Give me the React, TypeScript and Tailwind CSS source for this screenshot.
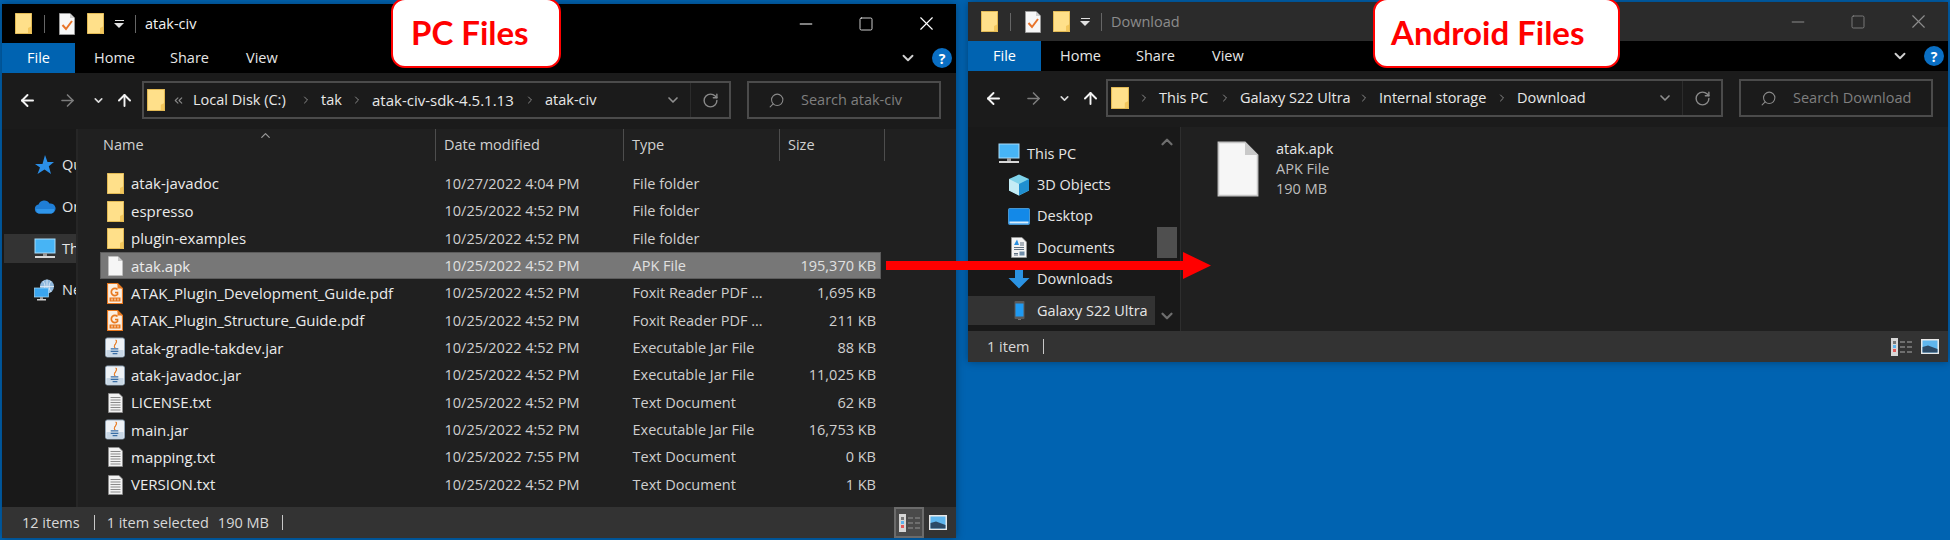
import { ArrowLeft, ArrowRight, ArrowUp, ChevronDown, ChevronRight, ChevronUp, ChevronsLeft, Minus, RotateCw, Search, Square, X } from 'lucide-react';
import type { ReactNode } from 'react';

function FolderIcon({ className = 'w-[17px] h-[21px] shrink-0' }: { className?: string }) {
  return (
    <svg viewBox="0 0 17 21" className={className}>
      <rect x="0" y="0" width="17" height="21" rx="1" fill="#ffe08a" />
      <path d="M13 21 V15 L17 13 V21 Z" fill="#f3c75d" />
      <rect x="0.5" y="0.5" width="16" height="20" rx="1" fill="none" stroke="#e2b953" strokeWidth="1" />
    </svg>
  );
}

function TaskDocIcon() {
  return (
    <svg viewBox="0 0 16 22" className="w-[16px] h-[22px]">
      <path d="M0.5 0.5 H11 L15.5 5 V21.5 H0.5 Z" fill="#f7f7f7" stroke="#9a9a9a" />
      <path d="M11 0.5 V5 H15.5" fill="#cfcfcf" />
      <path d="M3.5 12 L7 16 L13 8" fill="none" stroke="#e8742a" strokeWidth="2" />
    </svg>
  );
}

function BlankDocIcon({ className = 'w-[15px] h-[20px]' }: { className?: string }) {
  return (
    <svg viewBox="0 0 15 20" className={className}>
      <path d="M0.5 0.5 H10 L14.5 5 V19.5 H0.5 Z" fill="#f6f6f6" stroke="#c4c4c4" strokeWidth="0.6" />
      <path d="M10 0.5 L14.5 5 H10 Z" fill="#c9c9c9" />
    </svg>
  );
}

function TextDocIcon() {
  return (
    <svg viewBox="0 0 15 20" className="w-[15px] h-[20px]">
      <path d="M0.5 0.5 H11 L14.5 4 V19.5 H0.5 Z" fill="#f2f2f2" stroke="#8d8d8d" strokeWidth="0.8" />
      {[4, 6.5, 9, 11.5, 14, 16.5].map(y => (
        <rect key={y} x="2.5" y={y} width="10" height="1" fill="#8a8a8a" />
      ))}
    </svg>
  );
}

function PdfIcon() {
  return (
    <svg viewBox="0 0 16 21" className="w-[16px] h-[21px]">
      <path d="M0.5 0.5 H10.5 L15.5 5.5 V20.5 H0.5 Z" fill="#fbeee0" stroke="#e8791f" strokeWidth="1.2" />
      <path d="M10.5 0 L16 5.5 H10.5 Z" fill="#e8791f" />
      <path d="M10.5 6.5 A3.6 3.6 0 1 0 10.5 11.5 V9.5 H8" fill="none" stroke="#e8791f" strokeWidth="1.7" />
      <rect x="2.5" y="14.5" width="11" height="4" fill="#e8791f" />
      <rect x="4.5" y="15.5" width="1" height="2" fill="#fbeee0" />
      <rect x="7.5" y="15.5" width="1" height="2" fill="#fbeee0" />
      <rect x="10.5" y="15.5" width="1" height="2" fill="#fbeee0" />
    </svg>
  );
}

function JarIcon() {
  return (
    <svg viewBox="0 0 21 21" className="w-[21px] h-[21px]">
      <rect x="0.5" y="0.5" width="20" height="20" rx="2" fill="#eef2f6" stroke="#8fa3b5" />
      <rect x="1.5" y="13" width="18" height="7" rx="1" fill="#c9d8e6" />
      <path d="M11.5 2.5 C14 5.5 8 7 10.5 11 C8 8.5 13.5 6.5 11.5 2.5 Z" fill="#e8791f" stroke="#e8791f" strokeWidth="1" />
      <path d="M6 12 H14 M6 14.5 H14 M8 17 H13" stroke="#3a6ea5" strokeWidth="1.2" />
    </svg>
  );
}

function MonitorIcon() {
  return (
    <svg viewBox="0 0 22 21" className="w-[22px] h-[21px] shrink-0">
      <rect x="1" y="1" width="20" height="14" fill="#47b4f5" stroke="#a8dcfa" strokeWidth="1" />
      <rect x="9" y="15" width="4" height="3" fill="#9a9a9a" />
      <rect x="1" y="18" width="20" height="2" fill="#d8d8d8" />
    </svg>
  );
}

function CloudIcon() {
  return (
    <svg viewBox="0 0 22 15" className="w-[22px] h-[15px] shrink-0">
      <path d="M5 14.5 A4.5 4.5 0 0 1 4.5 5.6 A6 6 0 0 1 15.5 4.6 A5 5 0 0 1 17.5 14.5 Z" fill="#1f7ed6" />
      <path d="M2 10 H20 V12 Q19 14.5 17 14.5 H5 Q2.5 14.5 2 10 Z" fill="#2f95ea" />
    </svg>
  );
}

function NetworkIcon() {
  return (
    <svg viewBox="0 0 22 22" className="w-[22px] h-[22px] shrink-0">
      <circle cx="13" cy="7.5" r="7" fill="#8fb8dc" />
      <path d="M13 0.5 V14.5 M6 7.5 H20 M9 2 Q13 7 9 13 M17 2 Q13 7 17 13" stroke="#e4eef7" strokeWidth="0.8" fill="none" />
      <rect x="0.5" y="9" width="14" height="9" fill="#3aa5ef" stroke="#a8dcfa" strokeWidth="0.7" />
      <rect x="6" y="18" width="3" height="2" fill="#9a9a9a" />
      <rect x="3" y="20" width="9" height="1.5" fill="#d0d0d0" />
    </svg>
  );
}

function CubeIcon() {
  return (
    <svg viewBox="0 0 22 22" className="w-[22px] h-[22px]">
      <path d="M11 0.5 L21 5 V16.5 L11 21.5 L1 16.5 V5 Z" fill="#7fd3ea" />
      <path d="M1 5 L11 10 V21.5 L1 16.5 Z" fill="#c4ecf5" />
      <path d="M21 5 L11 10 V21.5 L21 16.5 Z" fill="#1f8fd0" />
    </svg>
  );
}

function DesktopIcon() {
  return (
    <svg viewBox="0 0 22 17" className="w-[22px] h-[17px]">
      <rect x="0.5" y="0.5" width="21" height="16" rx="1" fill="#1389e8" stroke="#5fb4f2" strokeWidth="0.7" />
      <rect x="1.5" y="13.5" width="19" height="2" fill="#d9eefc" />
    </svg>
  );
}

function DocumentsIcon() {
  return (
    <svg viewBox="0 0 16 21" className="w-[16px] h-[21px]">
      <path d="M0.5 0.5 H11 L15.5 5 V20.5 H0.5 Z" fill="#f4f4f4" stroke="#9a9a9a" strokeWidth="0.7" />
      <path d="M6 2.5 L3 8 H8 Z" fill="#2b8fe0" />
      <path d="M9 6 H13 M9 8 H13 M3 10.5 H13 M3 12.5 H13 M3 16.5 H7 M3 18 H7" stroke="#5f6f80" strokeWidth="1" />
      <rect x="8.5" y="14.5" width="5" height="4" fill="#6d8ba8" />
    </svg>
  );
}

function DownloadsIcon() {
  return (
    <svg viewBox="0 0 22 20" className="w-[22px] h-[20px]">
      <path d="M7 0 H15 V9 H21.5 L11 19.5 L0.5 9 H7 Z" fill="#2b93e3" />
    </svg>
  );
}

function PhoneIcon() {
  return (
    <svg viewBox="0 0 11 19" className="w-[11px] h-[19px]">
      <rect x="0.5" y="0" width="10" height="18" rx="1" fill="#5a5a5a" />
      <rect x="1.5" y="2.5" width="8" height="13" fill="#1f9af2" />
      <rect x="4" y="18" width="3" height="1" fill="#777" />
    </svg>
  );
}

function ViewIcons({ boxed }: { boxed: boolean }) {
  return (
    <div className="flex items-center h-full gap-[5px] pr-[9px]">
      <div className={`flex items-center justify-center gap-[2px] w-[30px] h-full ${boxed ? 'border-2 border-[#6b6b6b] bg-[#4a4a4a]' : ''}`}>
        <div className="flex flex-col items-center justify-center gap-[1px] w-[7px] h-[18px] bg-[#d6d6d6]">
          <div className="w-[3px] h-[3px] bg-[#777]" />
          <div className="w-[3px] h-[3px] bg-[#5eb4ee]" />
          <div className="w-[3px] h-[3px] bg-[#e05a5a]" />
        </div>
        <div className="grid grid-cols-2 gap-x-[2px] gap-y-[3px]">
          {[0, 1, 2, 3, 4, 5].map(i => (
            <div key={i} className="w-[5px] h-[2px] bg-[#6e6e6e]" />
          ))}
        </div>
      </div>
      <svg viewBox="0 0 18 15" className="w-[18px] h-[15px]">
        <rect x="0" y="0" width="18" height="15" fill="#e8e8e8" />
        <rect x="1.5" y="1.5" width="15" height="12" fill="#5fb6ee" />
        <path d="M1.5 8 L7 6.5 L16.5 10 V13.5 H1.5 Z" fill="#2d4a66" />
      </svg>
    </div>
  );
}

function TitleBar({ title, active }: { title: string; active: boolean }) {
  const fg = active ? 'text-[#f2f2f2]' : 'text-[#8c8c8c]';
  return (
    <div className={`flex items-center h-[39px] shrink-0 pl-[13px] ${active ? 'bg-black' : 'bg-[#2b2b2b]'}`}>
      <FolderIcon />
      <div className="ml-[12px] w-[1px] h-[18px] bg-[#666]" />
      <div className="ml-[14px]"><TaskDocIcon /></div>
      <div className="ml-[12px]"><FolderIcon /></div>
      <div className="ml-[8px] w-[14px] flex flex-col items-center gap-[2px]">
        <div className="w-[9px] h-[1px] bg-[#e0e0e0]" />
        <div className="w-0 h-0 border-x-[5px] border-x-transparent border-t-[5px] border-t-[#e0e0e0]" />
      </div>
      <div className="ml-[9px] w-[1px] h-[18px] bg-[#666]" />
      <span className={`ml-[9px] ${fg}`}>{title}</span>
      <div className={`ml-auto flex items-center ${active ? 'text-white' : 'text-[#8c8c8c]'}`}>
        <div className="w-[60px] flex justify-center"><Minus size={20} strokeWidth={1.2} /></div>
        <div className="w-[60px] flex justify-center"><Square size={16} strokeWidth={1.2} /></div>
        <div className="w-[60px] flex justify-center"><X size={23} strokeWidth={1.2} /></div>
      </div>
    </div>
  );
}

function RibbonTabs() {
  return (
    <div className="flex items-center h-[30px] shrink-0 bg-black text-[#e6e6e6]">
      <div className="w-[73px] h-full flex items-center justify-center bg-[#0063b1] text-white">File</div>
      <span className="ml-[19px] w-[76px]">Home</span>
      <span className="w-[76px]">Share</span>
      <span>View</span>
      <ChevronDown size={18} strokeWidth={2.5} className="ml-auto text-[#d0d0d0]" />
      <div className="ml-[15px] mr-[4px] w-[20px] h-[20px] rounded-full bg-[#0a6fc4] flex items-center justify-center text-white text-[14px] font-bold">?</div>
    </div>
  );
}

function Crumbs({ items }: { items: { label: string; width: string }[] }) {
  return (
    <>
      {items.map((c, i) => (
        <div key={c.label} className="flex items-center">
          <span className={`${c.width} whitespace-nowrap text-[#e8e8e8]`}>{c.label}</span>
          {i < items.length - 1 && (
            <div className="w-[19px]"><ChevronRight size={12} strokeWidth={2} className="-ml-[2px] text-[#8a8a8a]" /></div>
          )}
        </div>
      ))}
    </>
  );
}

function NavRow({ lead, address, search, navWidth }: { lead: ReactNode; address: ReactNode; search: string; navWidth: string }) {
  return (
    <div className="flex items-start h-[56px] shrink-0 pt-[8px] pr-[15px] gap-[16px] bg-[#1b1b1b]">
      <div className={`${navWidth} -mr-[16px] shrink-0 h-[38px] flex items-center pl-[16px] text-[#f4f4f4]`}>
        <ArrowLeft size={19} strokeWidth={2.4} />
        <ArrowRight size={19} strokeWidth={2} className="ml-[21px] text-[#7d7d7d]" />
        <ChevronDown size={13} strokeWidth={3} className="ml-[15px] text-[#d8d8d8]" />
        <ArrowUp size={19} strokeWidth={2.4} className="ml-[10px]" />
      </div>
      <div className="flex-1 h-[38px] flex items-center border-2 border-[#4b4b4b] pl-[3px]">
        <FolderIcon className="w-[18px] h-[24px] shrink-0" />
        {lead}
        {address}
        <div className="ml-auto flex items-center h-full">
          <ChevronDown size={16} strokeWidth={2.5} className="text-[#8f8f8f]" />
          <div className="ml-[9px] w-[1px] h-full bg-[#2c2c2c]" />
          <div className="w-[38px] flex justify-center"><RotateCw size={17} strokeWidth={2} className="text-[#8a8a8a]" /></div>
        </div>
      </div>
      <div className="w-[194px] h-[38px] flex items-center border-2 border-[#4b4b4b] pl-[19px] text-[#7f7f7f]">
        <Search size={17} strokeWidth={1.5} className="-scale-x-100 text-[#8a8a8a]" />
        <span className="ml-[16px] whitespace-nowrap">{search}</span>
      </div>
    </div>
  );
}

function PaneItem({ icon, label, selected }: { icon: ReactNode; label: string; selected?: boolean }) {
  return (
    <div className={`flex items-center h-[29px] pl-[30px] whitespace-nowrap text-[#e6e6e6] ${selected ? 'bg-[#333]' : ''}`}>
      <div className="w-[22px] shrink-0 flex justify-center">{icon}</div>
      <span className="ml-[7px]">{label}</span>
    </div>
  );
}

const files = [
  { name: 'atak-javadoc', date: '10/27/2022 4:04 PM', type: 'File folder', size: '', icon: <FolderIcon /> },
  { name: 'espresso', date: '10/25/2022 4:52 PM', type: 'File folder', size: '', icon: <FolderIcon /> },
  { name: 'plugin-examples', date: '10/25/2022 4:52 PM', type: 'File folder', size: '', icon: <FolderIcon /> },
  { name: 'atak.apk', date: '10/25/2022 4:52 PM', type: 'APK File', size: '195,370 KB', icon: <BlankDocIcon />, selected: true },
  { name: 'ATAK_Plugin_Development_Guide.pdf', date: '10/25/2022 4:52 PM', type: 'Foxit Reader PDF ...', size: '1,695 KB', icon: <PdfIcon /> },
  { name: 'ATAK_Plugin_Structure_Guide.pdf', date: '10/25/2022 4:52 PM', type: 'Foxit Reader PDF ...', size: '211 KB', icon: <PdfIcon /> },
  { name: 'atak-gradle-takdev.jar', date: '10/25/2022 4:52 PM', type: 'Executable Jar File', size: '88 KB', icon: <JarIcon /> },
  { name: 'atak-javadoc.jar', date: '10/25/2022 4:52 PM', type: 'Executable Jar File', size: '11,025 KB', icon: <JarIcon /> },
  { name: 'LICENSE.txt', date: '10/25/2022 4:52 PM', type: 'Text Document', size: '62 KB', icon: <TextDocIcon /> },
  { name: 'main.jar', date: '10/25/2022 4:52 PM', type: 'Executable Jar File', size: '16,753 KB', icon: <JarIcon /> },
  { name: 'mapping.txt', date: '10/25/2022 7:55 PM', type: 'Text Document', size: '0 KB', icon: <TextDocIcon /> },
  { name: 'VERSION.txt', date: '10/25/2022 4:52 PM', type: 'Text Document', size: '1 KB', icon: <TextDocIcon /> },
];

function PcWindow() {
  return (
    <div className="w-[954px] h-[534px] mt-[4px] shrink-0 flex flex-col shadow-[0_0_8px_rgba(0,0,0,0.35)]">
      <TitleBar title="atak-civ" active />
      <RibbonTabs />
      <NavRow
        navWidth="w-[140px]"
        lead={<ChevronsLeft size={13} strokeWidth={2} className="ml-[7px] text-[#8a8a8a]" />}
        address={
          <div className="ml-[8px] flex">
            <Crumbs items={[
              { label: 'Local Disk (C:)', width: 'w-[109px]' },
              { label: 'tak', width: 'w-[32px]' },
              { label: 'atak-civ-sdk-4.5.1.13', width: 'w-[154px] text-[15px]' },
              { label: 'atak-civ', width: 'w-[60px]' },
            ]} />
          </div>
        }
        search="Search atak-civ"
      />
      <div className="flex-1 flex min-h-0">
        <div className="w-[74px] shrink-0 overflow-hidden bg-[#191919] pt-[22px] flex flex-col">
          <div className="flex items-center h-[28px] pl-[32px] whitespace-nowrap text-[#e6e6e6]">
            <svg viewBox="0 0 20 20" className="w-[20px] h-[20px] shrink-0"><path d="M11 0 L13.5 7 H20 L14.8 11.2 L17 19 L10.5 14.5 L3.5 19 L6 12.5 L1 9 H8.5 Z" fill="#2b8fe8" /></svg>
            <span className="ml-[8px]">Quick access</span>
          </div>
          <div className="flex items-center h-[28px] mt-[13.5px] pl-[32px] whitespace-nowrap text-[#e6e6e6]">
            <CloudIcon />
            <span className="ml-[6px]">OneDrive</span>
          </div>
          <div className="flex items-center h-[29px] mt-[13.5px] ml-[2px] pl-[30px] whitespace-nowrap text-[#e6e6e6] bg-[#333]">
            <MonitorIcon />
            <span className="ml-[6px]">This PC</span>
          </div>
          <div className="flex items-center h-[28px] mt-[13px] pl-[32px] whitespace-nowrap text-[#e6e6e6]">
            <NetworkIcon />
            <span className="ml-[6px]">Network</span>
          </div>
        </div>
        <div className="w-[2px] bg-[#262626]" />
        <div className="flex-1 bg-[#202020] min-w-0 relative">
          <ChevronUp size={15} strokeWidth={2} className="absolute left-[180px] -top-[1px] text-[#9a9a9a]" />
          <div className="flex h-[41px] text-[#d0d0d0]">
            <div className="w-[358px] h-[32px] pl-[25px] pt-[5px] border-r border-[#4d4d4d]">Name</div>
            <div className="w-[188px] h-[32px] pl-[8px] pt-[5px] border-r border-[#4d4d4d]">Date modified</div>
            <div className="w-[156px] h-[32px] pl-[8px] pt-[5px] border-r border-[#4d4d4d]">Type</div>
            <div className="w-[105px] h-[32px] pl-[8px] pt-[5px] border-r border-[#4d4d4d]">Size</div>
          </div>
          <div className="ml-[22px] w-[781px]">
            {files.map(f => (
              <div key={f.name} className={`flex items-center h-[27.36px] pl-[5px] pr-[5px] whitespace-nowrap ${f.selected ? 'bg-[#777] outline outline-1 -outline-offset-1 outline-[#5c5c5c] text-[#e0e0e0]' : 'text-[#cfcfcf]'}`}>
                <div className="w-[20px] mr-[6px] flex justify-center">{f.icon}</div>
                <span className="w-[313.5px] text-[15px] text-[#ebebeb]">{f.name}</span>
                <span className="w-[188px]">{f.date}</span>
                <span className="flex-1">{f.type}</span>
                <span className="text-right">{f.size}</span>
              </div>
            ))}
          </div>
        </div>
      </div>
      <div className="flex items-center h-[31px] shrink-0 bg-[#333] text-[#d8d8d8] pl-[20px]">
        <span>12 items</span>
        <div className="ml-[14px] w-[1px] h-[15px] bg-[#c8c8c8]" />
        <span className="ml-[12px]">1 item selected</span>
        <span className="ml-[9px]">190 MB</span>
        <div className="ml-[13px] w-[1px] h-[15px] bg-[#c8c8c8]" />
        <div className="ml-auto h-full"><ViewIcons boxed /></div>
      </div>
    </div>
  );
}

function AndroidWindow() {
  return (
    <div className="w-[980px] h-[360px] mt-[2px] ml-[12px] shrink-0 flex flex-col shadow-[0_0_8px_rgba(0,0,0,0.35)]">
      <TitleBar title="Download" active={false} />
      <RibbonTabs />
      <NavRow
        navWidth="w-[138px]"
        lead={<div className="ml-[9px] w-[21px]"><ChevronRight size={12} strokeWidth={2} className="text-[#8a8a8a]" /></div>}
        address={
          <div className="flex">
            <Crumbs items={[
              { label: 'This PC', width: 'w-[62px]' },
              { label: 'Galaxy S22 Ultra', width: 'w-[120px]' },
              { label: 'Internal storage', width: 'w-[119px]' },
              { label: 'Download', width: 'w-[70px]' },
            ]} />
          </div>
        }
        search="Search Download"
      />
      <div className="flex-1 flex min-h-0">
        <div className="w-[212px] shrink-0 flex bg-[#191919]">
          <div className="w-[187px] shrink-0 pt-[12px] flex flex-col gap-[2.4px] overflow-hidden">
            <PaneItem icon={<MonitorIcon />} label="This PC" />
            <div className="pl-[10px] flex flex-col gap-[2.4px]">
              <PaneItem icon={<CubeIcon />} label="3D Objects" />
              <PaneItem icon={<DesktopIcon />} label="Desktop" />
              <PaneItem icon={<DocumentsIcon />} label="Documents" />
              <PaneItem icon={<DownloadsIcon />} label="Downloads" />
            </div>
            <div className="bg-[#333] pl-[10px]">
              <PaneItem icon={<PhoneIcon />} label="Galaxy S22 Ultra" selected />
            </div>
          </div>
          <div className="flex-1 flex flex-col items-center py-[6px] pl-[2px] pr-[3px] text-[#6e6e6e]">
            <ChevronUp size={18} strokeWidth={3} />
            <div className="mt-[76px] w-[20px] h-[31px] bg-[#4f4f4f]" />
            <ChevronDown size={18} strokeWidth={3} className="mt-auto" />
          </div>
        </div>
        <div className="w-[1px] bg-[#2e2e2e]" />
        <div className="flex-1 bg-[#202020] flex items-start pl-[36px] pt-[14px]">
          <BlankDocIcon className="w-[42px] h-[56px]" />
          <div className="ml-[17px] -mt-[2px] flex flex-col leading-[20px] text-[#bdbdbd]">
            <span className="text-[#e6e6e6]">atak.apk</span>
            <span>APK File</span>
            <span>190 MB</span>
          </div>
        </div>
      </div>
      <div className="flex items-center h-[31px] shrink-0 bg-[#333] text-[#d8d8d8] pl-[19px]">
        <span>1 item</span>
        <div className="ml-[14px] w-[1px] h-[15px] bg-[#c8c8c8]" />
        <div className="ml-auto h-full"><ViewIcons boxed={false} /></div>
      </div>
    </div>
  );
}

export default function App() {
  return (
    <div className="relative w-[1950px] h-[540px] overflow-hidden bg-[#0063b1] text-[14.5px] font-['Open_Sans',sans-serif]">
      <div className="flex pl-[2px]">
        <PcWindow />
        <AndroidWindow />
      </div>

      {/* callouts pasted over the screenshot */}
      <div className="absolute left-[391px] -top-[2px] w-[170px] h-[70px] flex items-center pl-[18px] rounded-[14px] border-2 border-[#f00] bg-white text-[#f00] text-[33px] font-bold font-['Lato',sans-serif]">PC Files</div>
      <div className="absolute left-[1373px] -top-[2px] w-[247px] h-[70px] flex items-center pl-[16px] rounded-[14px] border-2 border-[#f00] bg-white text-[#f00] text-[33px] font-bold font-['Lato',sans-serif]">Android Files</div>
      <svg viewBox="0 0 325 27" className="absolute left-[886px] top-[252px] w-[325px] h-[27px]">
        <path d="M0 9 H297 V0 L325 13.5 L297 27 V18 H0 Z" fill="#f00" />
      </svg>
    </div>
  );
}
